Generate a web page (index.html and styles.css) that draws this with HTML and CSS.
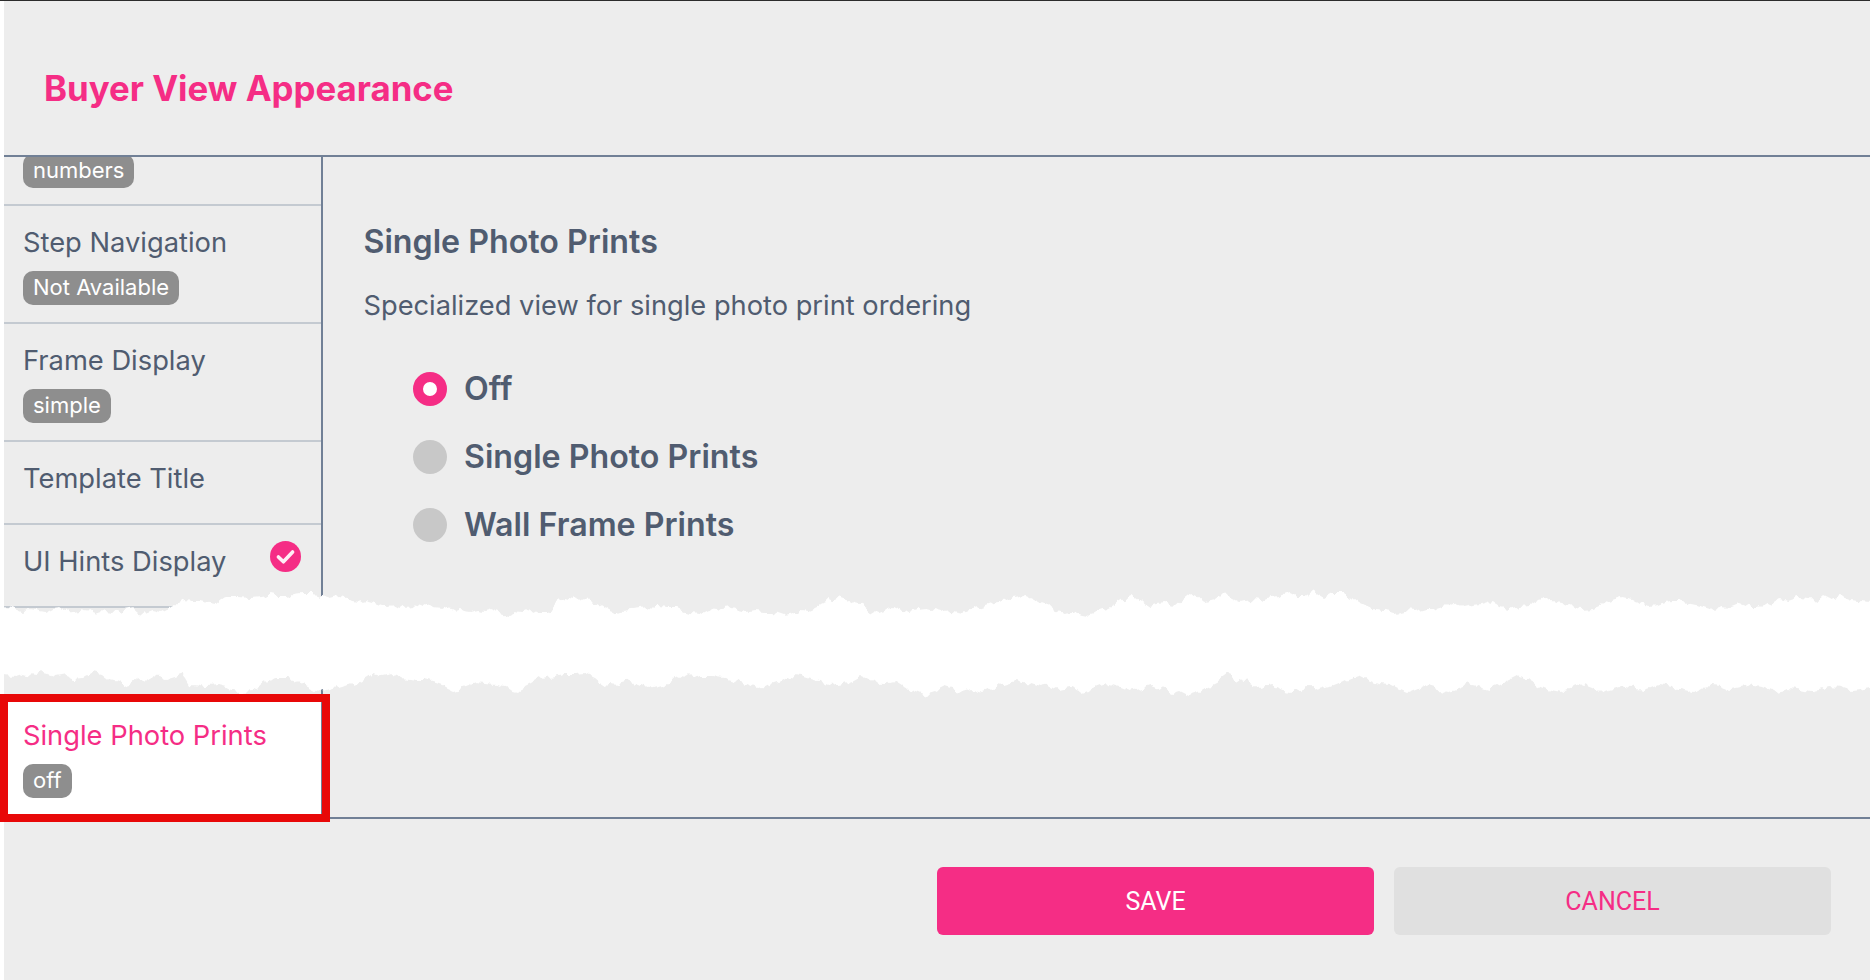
FILE: index.html
```html
<!DOCTYPE html>
<html lang="en">
<head>
<meta charset="utf-8">
<title>Buyer View Appearance</title>
<link rel="stylesheet" href="styles.css">
</head>
<body>
<div class="app">
  <header class="header"><h1 class="title">Buyer View Appearance</h1></header>
  <main class="main">
    <nav class="sidebar">
      <div class="row row-stub"><span class="chip chip-clipped">numbers</span></div>
      <div class="row"><div class="label">Step Navigation</div><span class="chip">Not Available</span></div>
      <div class="row"><div class="label">Frame Display</div><span class="chip">simple</span></div>
      <div class="row row-short"><div class="label">Template Title</div></div>
      <div class="row row-short row-check">
        <div class="label">UI Hints Display</div>
        <svg class="check" viewBox="0 0 31 31"><circle cx="15.5" cy="15.5" r="15.5" fill="#f52d85"/><path d="M8.4 16l5 4.8 9.2-9.8" fill="none" stroke="#fff" stroke-width="3.6" stroke-linecap="round" stroke-linejoin="round" opacity=".92"/></svg>
      </div>
      <div class="row row-hidden"></div>
      <div class="row row-active"><div class="label">Single Photo Prints</div><span class="chip">off</span></div>
    </nav>
    <section class="content">
      <h2 class="heading">Single Photo Prints</h2>
      <p class="desc">Specialized view for single photo print ordering</p>
      <div class="options">
        <div class="option"><span class="radio radio-on"></span><span class="option-label">Off</span></div>
        <div class="option"><span class="radio"></span><span class="option-label">Single Photo Prints</span></div>
        <div class="option"><span class="radio"></span><span class="option-label">Wall Frame Prints</span></div>
      </div>
    </section>
  </main>
  <footer class="footer">
    <button class="btn btn-save">SAVE</button>
    <button class="btn btn-cancel">CANCEL</button>
  </footer>
  <svg class="tear" viewBox="0 0 1870 980" aria-hidden="true">
    <filter id="rough" filterUnits="userSpaceOnUse" x="-30" y="0" width="1930" height="980">
      <feTurbulence type="fractalNoise" baseFrequency="0.13 0.03" numOctaves="2" seed="7"/>
      <feDisplacementMap in="SourceGraphic" scale="11" xChannelSelector="G" yChannelSelector="R"/>
    </filter>
    <polygon filter="url(#rough)" fill="#fff" points="-20,606 4,606 10,607 17,609 24,612 30,609 38,611 46,612 52,609 60,608 66,612 72,611 80,610 87,607 93,612 98,614 106,611 115,612 122,609 132,607 138,612 144,613 152,610 160,612 166,609 172,607 178,604 184,600 192,601 200,601 208,603 216,604 222,599 228,597 238,597 250,598 262,597 270,594 278,596 285,596 292,595 300,594 312,594 320,595 330,598 338,596 345,597 352,601 358,602 365,600 372,602 380,605 386,607 394,606 400,608 406,606 412,605 420,607 426,604 432,608 440,609 447,607 455,608 462,612 470,613 478,611 485,612 492,610 500,613 508,615 515,612 522,613 530,610 538,614 545,614 552,609 558,602 565,598 572,600 580,597 588,601 596,602 604,607 610,611 614,613 622,610 630,609 640,608 649,606 658,607 668,608 677,608 684,611 692,612 700,613 708,609 716,610 722,608 729,607 738,610 746,612 756,611 766,612 775,612 784,615 792,614 800,611 808,612 815,609 822,604 830,600 838,597 846,600 853,602 861,604 868,609 878,613 886,610 894,607 900,610 910,613 918,610 928,609 940,612 952,610 962,612 972,610 985,606 994,603 1004,601 1014,597 1024,595 1032,599 1040,603 1048,606 1056,610 1064,612 1072,611 1080,614 1086,615 1096,612 1106,609 1116,604 1124,599 1132,595 1140,601 1147,607 1156,604 1165,603 1174,607 1182,600 1191,593 1198,596 1206,602 1214,600 1222,593 1230,597 1240,602 1250,600 1260,601 1268,598 1278,596 1290,592 1298,596 1306,596 1314,592 1324,598 1333,593 1344,593 1352,598 1358,603 1366,607 1374,610 1384,611 1395,613 1404,611 1413,612 1424,609 1434,609 1444,606 1452,603 1462,607 1472,605 1482,604 1492,601 1500,607 1510,609 1520,606 1530,605 1543,597 1552,601 1562,603 1572,607 1582,609 1592,608 1604,603 1612,600 1622,597 1632,599 1640,604 1650,606 1660,604 1670,601 1680,601 1690,604 1700,606 1710,609 1720,606 1730,607 1740,603 1750,607 1760,607 1770,604 1778,599 1788,601 1800,597 1808,598 1816,602 1824,595 1832,599 1840,596 1850,600 1860,601 1890,604 1890,684 1860,690 1850,691 1840,688 1830,687 1820,690 1810,692 1800,690 1790,688 1780,690 1770,692 1760,688 1750,686 1740,689 1730,691 1720,687 1710,686 1700,689 1690,692 1680,690 1670,686 1660,684 1650,688 1640,691 1630,688 1620,686 1610,689 1600,692 1590,688 1580,684 1570,687 1560,692 1550,690 1540,686 1530,680 1518,675 1508,680 1498,685 1488,689 1478,686 1468,684 1458,688 1448,692 1438,689 1428,686 1418,690 1408,694 1398,690 1388,685 1378,684 1368,680 1358,675 1350,678 1340,683 1330,687 1320,690 1310,686 1300,688 1290,692 1280,690 1270,686 1260,689 1250,684 1240,680 1228,675 1220,681 1210,686 1200,692 1190,695 1180,690 1170,693 1160,689 1150,685 1140,688 1130,690 1120,686 1110,683 1100,686 1090,690 1080,692 1070,688 1060,690 1050,685 1040,687 1030,684 1014,681 1004,684 994,688 984,692 974,689 964,692 954,690 944,687 934,692 924,695 914,691 900,685 892,680 880,683 872,680 861,675 852,680 844,683 832,685 822,682 812,679 802,676 792,675 782,681 770,685 758,688 748,684 738,681 725,677 712,675 700,675 692,677 683,675 675,679 665,684 657,685 649,687 640,683 631,680 620,683 612,682 603,685 595,678 585,673 575,674 565,674 555,676 540,678 530,684 522,688 517,692 510,690 505,687 495,685 485,684 476,683 465,687 453,690 445,686 436,683 425,680 414,680 402,678 392,674 382,676 373,673 367,677 358,682 350,685 340,687 330,690 321,693 312,688 301,683 294,680 287,678 278,678 270,680 262,685 252,691 241,692 230,689 218,686 205,687 192,685 188,678 184,673 175,676 165,679 155,676 146,681 138,678 130,683 123,685 114,682 106,680 100,675 92,673 84,677 75,678 66,674 56,676 44,673 35,675 23,673 14,676 5,675 -20,675"/>
  </svg>
  <div class="highlight"></div>
</div>
</body>
</html>
```
FILE: styles.css
```css
* { box-sizing: border-box; }
html, body { margin: 0; height: 100%; background: #fff; overflow: hidden; }
body { font-family: "Inter", "Noto Sans", sans-serif; color: #505c70; }
.app {
  position: relative;
  width: 1870px;
  height: 980px;
  padding-left: 4px;
  background: #fff;
  border-top: 1px solid #2c2c2c;
  display: flex;
  flex-direction: column;
}
.header {
  height: 154px;
  background: #ededed;
  display: flex;
  align-items: center;
  padding: 0 0 0 40px;
  flex: none;
}
.title { margin: 0; font-size: 34.8px; font-weight: 700; color: #f52d85; position: relative; top: 10px; }
.main {
  flex: none;
  height: 664px;
  background: #ededed;
  border-top: 2px solid #718096;
  border-bottom: 2px solid #718096;
  display: flex;
}
.sidebar {
  width: 319px;
  flex: none;
  border-right: 2px solid #718096;
  overflow: hidden;
  display: flex;
  flex-direction: column;
}
.row {
  flex: none;
  height: 118px;
  padding: 19px 19px 0;
  border-bottom: 2px solid #c4cad1;
}
.row-stub { height: 49px; padding-top: 0; }
.row-short { height: 83px; }
.row-check { display: flex; justify-content: space-between; align-items: flex-start; padding-right: 20px; }
.row-hidden { height: 94px; }
.row-active { background: #fff; border-bottom: 0; height: 116px; padding-top: 16px; }
.row-active .label { color: #f52d85; }
.label { font-size: 27.3px; line-height: 36px; }
.chip {
  display: inline-block;
  height: 34px;
  line-height: 32px;
  margin-top: 10px;
  padding: 0 10px;
  border-radius: 10px;
  background: #8e8e8e;
  color: #fff;
  font-size: 22px;
}
.chip-clipped { margin-top: -3px; }
.row-active .chip { margin-top: 10px; }
.check { width: 31px; height: 31px; margin-top: -3px; flex: none; }
.content { flex: 1; padding: 0 0 0 40.5px; }
.heading { margin: 65px 0 0; font-size: 32.2px; line-height: 40px; font-weight: 600; }
.desc { margin: 26px 0 0; font-size: 27.25px; line-height: 36px; }
.options { margin: 48px 0 0 49.5px; display: flex; flex-direction: column; gap: 34px; }
.option { display: flex; align-items: center; gap: 17px; height: 34px; }
.radio { width: 34px; height: 34px; border-radius: 50%; background: #c8c8c8; flex: none; }
.radio-on { background: #fff; border: 10px solid #f52d85; }
.option-label { font-size: 32.2px; font-weight: 600; line-height: 34px; }
.footer {
  flex: 1;
  background: #ededed;
  display: flex;
  justify-content: flex-end;
  gap: 20px;
  padding: 48px 39px 0 0;
}
.btn {
  width: 437px;
  height: 68px;
  border: 0;
  border-radius: 6px;
  font-family: "Roboto", sans-serif;
  font-size: 25px;
  padding-top: 2px;
}
.btn-save { background: #f52d85; color: #fff; }
.btn-cancel { background: #e0e0e0; color: #f52d85; }
.tear { position: absolute; left: 0; top: -1px; width: 1870px; height: 980px; pointer-events: none; }
.highlight {
  position: absolute;
  left: 0;
  top: 693px;
  width: 330px;
  height: 128px;
  border: 8px solid #e80808;
  pointer-events: none;
}
```
